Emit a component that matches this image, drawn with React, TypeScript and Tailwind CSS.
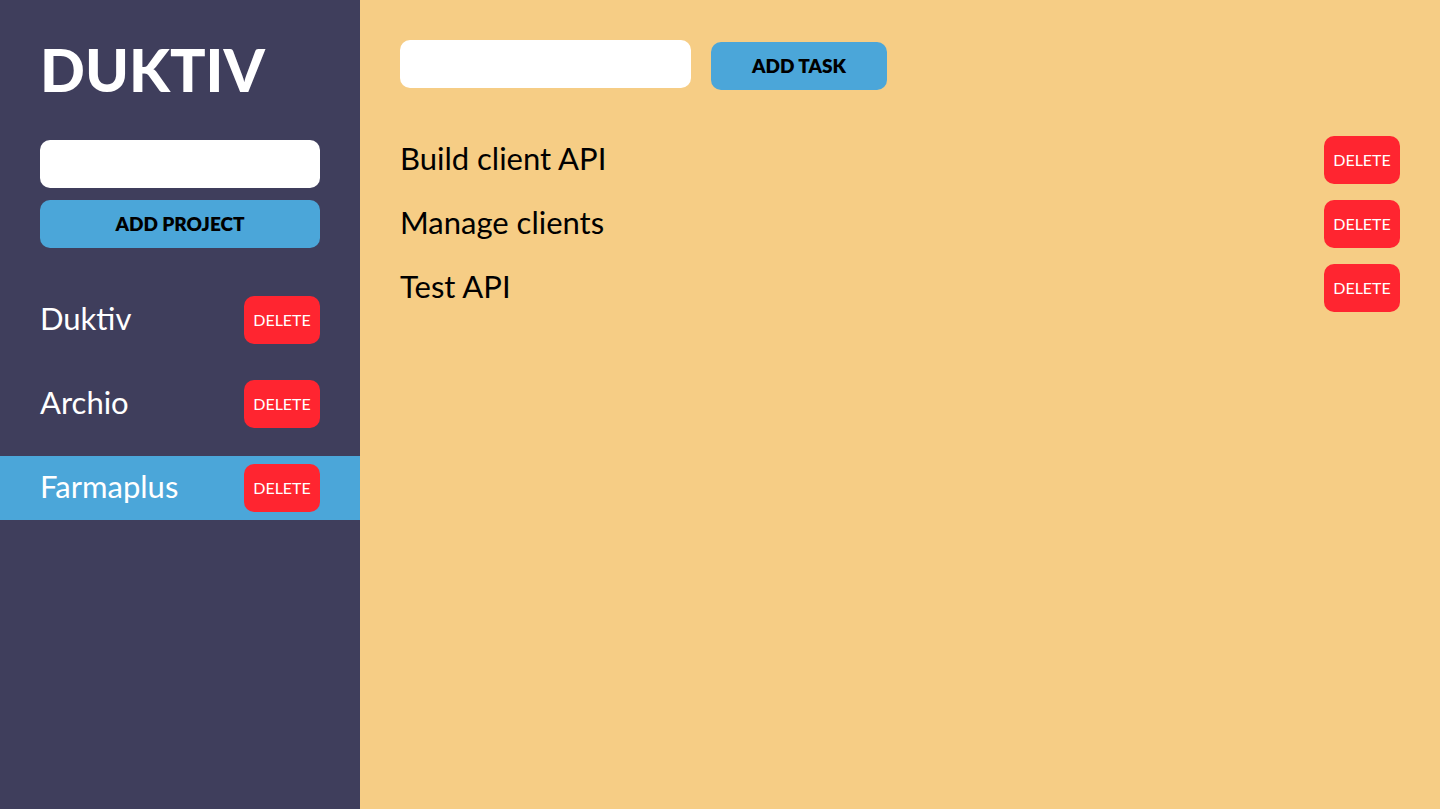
import React, { useState } from 'react';

const font = { fontFamily: 'Lato, "Noto Sans", sans-serif' };

export default function App() {
  const [projects] = useState(['Duktiv', 'Archio', 'Farmaplus']);
  const [active] = useState(2);
  const [tasks] = useState(['Build client API', 'Manage clients', 'Test API']);

  return (
    <div className="flex w-full h-[809px]" style={font}>
      {/* Sidebar */}
      <aside className="w-[360px] shrink-0 bg-[#3f3e5c] flex flex-col pt-[34px]">
        <h1 className="px-10 text-[59px] leading-[72px] font-black text-white">DUKTIV</h1>

        <div className="px-10 mt-[34px] flex flex-col gap-3">
          <input className="h-12 w-full rounded-[10px] bg-white outline-none px-3 text-lg" />
          <button className="h-12 w-full rounded-[10px] bg-[#4ba6d9] text-black font-extrabold text-[19px] uppercase">
            Add Project
          </button>
        </div>

        <ul className="mt-10 flex flex-col gap-5">
          {projects.map((p, i) => (
            <li
              key={p}
              className={`h-16 px-10 flex items-center justify-between ${i === active ? 'bg-[#4ba6d9]' : ''}`}
            >
              <span className="text-white text-[31px] font-normal -mt-[3px]">{p}</span>
              <DeleteButton />
            </li>
          ))}
        </ul>
      </aside>

      {/* Main */}
      <main className="flex-1 bg-[#f6cd85] p-10">
        <div className="flex items-start gap-5">
          <input className="h-12 w-[291px] rounded-[10px] bg-white outline-none px-3 text-lg" />
          <button className="mt-[2px] h-12 w-[176px] rounded-[10px] bg-[#4ba6d9] text-black font-extrabold text-[19px] uppercase">
            Add Task
          </button>
        </div>

        <ul className="mt-[46px] flex flex-col gap-4">
          {tasks.map((t) => (
            <li key={t} className="h-12 flex items-center justify-between">
              <span className="text-black text-[31px] font-normal -mt-[3px]">{t}</span>
              <DeleteButton />
            </li>
          ))}
        </ul>
      </main>
    </div>
  );
}

function DeleteButton() {
  return (
    <button className="h-12 w-[76px] rounded-[10px] bg-[#ff2530] text-white text-[16px] uppercase">
      Delete
    </button>
  );
}
